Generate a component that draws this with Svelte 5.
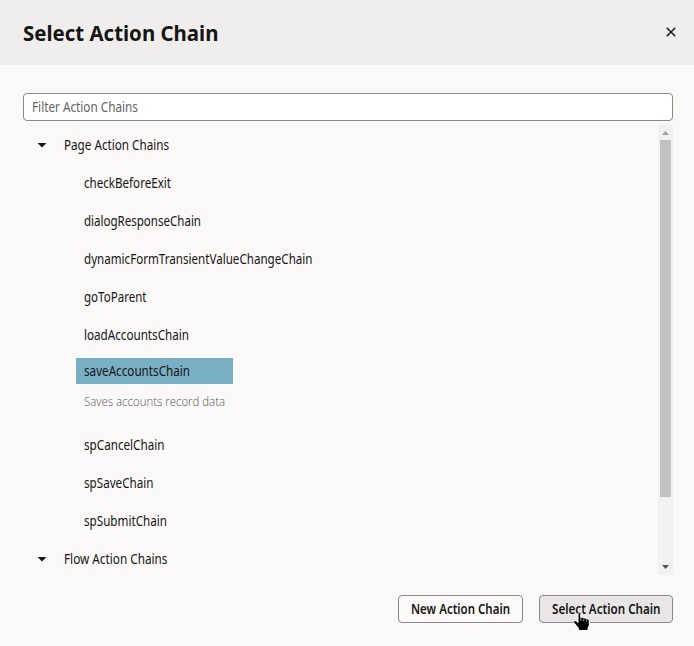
<script>
  const page = [
    { name: 'checkBeforeExit', w: 87 },
    { name: 'dialogResponseChain', w: 117 },
    { name: 'dynamicFormTransientValueChangeChain', w: 228.5 },
    { name: 'goToParent', w: 62.5 },
    { name: 'loadAccountsChain', w: 105 },
    { name: 'saveAccountsChain', w: 106 },
    { name: 'spCancelChain', w: 80.5 },
    { name: 'spSaveChain', w: 69.5 },
    { name: 'spSubmitChain', w: 83 }
  ];
  const selected = 'saveAccountsChain';

  // Condenses a label horizontally to the given width.
  function fit(node, width) {
    const natural = node.getBoundingClientRect().width;
    node.style.transform = `scaleX(${width / natural})`;
    node.style.marginRight = `${width - natural}px`;
  }
</script>

{#snippet label(text, w)}<span class="label" use:fit={w}>{text}</span>{/snippet}

{#snippet group(text, w)}
  <div class="row group">
    <svg width="10" height="5" viewBox="0 0 10 5"><path d="M.6 0h8.8L5 4.5z" fill="#161513" /></svg>
    {@render label(text, w)}
  </div>
{/snippet}

<div class="dialog">
  <header>
    <h1>{@render label('Select Action Chain', 195.5)}</h1>
    <svg class="close" width="10" height="10" viewBox="0 0 10 10">
      <path d="M.8.8l8.4 8.4M9.2.8L.8 9.2" stroke="#161513" stroke-width="1.5" />
    </svg>
  </header>

  <div class="filter">{@render label('Filter Action Chains', 106)}</div>

  <div class="body">
    <div class="tree">
      {@render group('Page Action Chains', 105)}
      {#each page as item}
        {#if item.name === selected}
          <div class="selected">{@render label(item.name, item.w)}</div>
          <div class="note">{@render label('Saves accounts record data', 141)}</div>
        {:else}
          <div class="row item">{@render label(item.name, item.w)}</div>
        {/if}
      {/each}
      {@render group('Flow Action Chains', 103.5)}
    </div>
    <div class="scrollbar">
      <svg width="7" height="4" viewBox="0 0 7 4"><path d="M0 4h7L3.5 0z" fill="#a3a3a3" /></svg>
      <div class="thumb"></div>
      <svg class="down" width="7" height="4" viewBox="0 0 7 4"><path d="M0 0h7L3.5 4z" fill="#505050" /></svg>
    </div>
  </div>

  <footer>
    <button class="new">{@render label('New Action Chain', 99)}</button>
    <button class="select">
      {@render label('Select Action Chain', 108.5)}
      <svg class="cursor" width="19" height="20" viewBox="0 0 19 20">
        <path
          d="M5 1.5C5 .2 7.8.2 7.8 1.5V5.7C8.6 5 10.4 5.2 10.7 6.2 11.6 5.6 13.2 6 13.5 7 14.8 6.6 16.3 7.3 16.3 8.7V13.4L15 16V18.5H5.5V16.3L3.2 13.6.8 10.6C0 9.2 1.6 7.8 3.2 8.9L5 10.5Z"
          fill="#000" stroke="#fff" stroke-width="1" />
        <path d="M7.9 6v3M10.8 7v2.4M13.6 7.8v2" stroke="#fff" stroke-width=".6" />
      </svg>
    </button>
  </footer>
</div>

<style>
  :global(body) { margin: 0; }
  .dialog {
    box-sizing: border-box;
    width: 694px;
    height: 646px;
    background: #fbf9f8;
    color: #161513;
    font: 13.6px/20px "Noto Sans", sans-serif;
    overflow: hidden;
  }
  .label {
    display: inline-block;
    white-space: nowrap;
    transform-origin: 0 50%;
  }
  header {
    display: flex;
    justify-content: space-between;
    height: 65px;
    background: #f0eeed;
  }
  h1 {
    margin: 19px 0 0 22.5px;
    font-size: 21px;
    line-height: 29px;
    font-weight: 700;
  }
  .close { margin: 27px 18px 0 0; }
  .filter {
    box-sizing: border-box;
    height: 28px;
    margin: 28px 21px 0 23px;
    padding: 3px 8px;
    border: 1px solid #8b8885;
    border-radius: 4px;
    background: #fff;
    color: #65625f;
  }
  .body {
    display: flex;
    height: 450px;
    margin: 4px 21px 0 23px;
  }
  .tree { flex: 1; padding-top: 1px; }
  .row {
    display: flex;
    align-items: center;
    height: 38px;
  }
  .group { gap: 17px; padding-left: 14px; }
  .item { padding-left: 61px; }
  .selected {
    box-sizing: border-box;
    width: 157px;
    height: 26px;
    margin: 4px 0 0 53px;
    padding: 3px 8px;
    background: #79afc5;
  }
  .note {
    height: 34px;
    margin-left: 61px;
    padding-top: 8px;
    font: 300 12px/20px "Open Sans", sans-serif;
    color: #585653;
  }
  .scrollbar {
    display: flex;
    flex-direction: column;
    align-items: center;
    width: 15px;
    background: #f1f1f1;
  }
  .scrollbar svg { margin-top: 6px; }
  .thumb {
    width: 11px;
    height: 357px;
    margin-top: 5px;
    background: #c1c1c1;
  }
  .scrollbar .down { margin-top: 68px; }
  footer {
    display: flex;
    justify-content: flex-end;
    gap: 16px;
    margin: 20px 21px 0 0;
  }
  button {
    position: relative;
    box-sizing: border-box;
    height: 28px;
    padding: 0 0 0 12px;
    border: 1px solid #8b8885;
    border-radius: 4px;
    background: #fbf9f8;
    color: #161513;
    font: 600 13.6px/26px "Noto Sans", sans-serif;
    text-align: left;
  }
  .new { width: 125px; }
  .select { width: 134px; background: #e8e6e6; }
  .cursor { position: absolute; left: 33px; top: 16px; }
</style>
